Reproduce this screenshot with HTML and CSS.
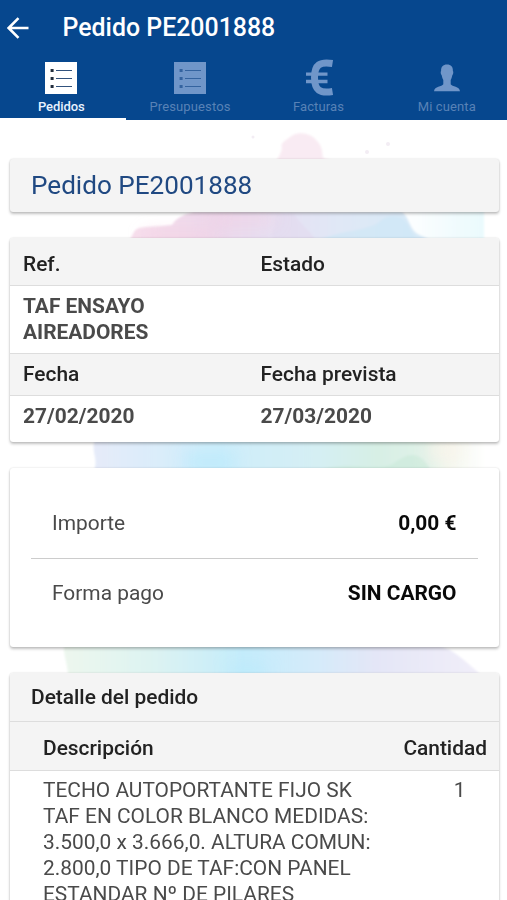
FILE: index.html
```html
<!DOCTYPE html>
<html lang="es">
<head>
<meta charset="utf-8">
<meta name="viewport" content="width=device-width, initial-scale=1">
<title>Pedido PE2001888</title>
<link rel="stylesheet" href="styles.css">
</head>
<body>
<header class="header">
  <div class="titlebar">
    <svg class="back" viewBox="0 0 22 22" aria-hidden="true"><path d="M21.500 11H2M11.500 1.200L1.700 11l9.800 9.800"/></svg>
    <h1 class="title">Pedido PE2001888</h1>
  </div>
  <nav class="tabs">
    <a class="tab active">
      <svg class="tab-icon" viewBox="0 0 32 32" aria-hidden="true"><path class="sheet" d="M0 0h32v32H0z"/><path class="lines" d="M11 8.500h16M11 16.500h16M11 24.500h16"/><path class="dots" d="M5.600 8.500h3M5.600 16.500h3M5.600 24.500h3"/></svg>
      <span>Pedidos</span>
    </a>
    <a class="tab">
      <svg class="tab-icon" viewBox="0 0 32 32" aria-hidden="true"><path class="sheet" d="M0 0h32v32H0z"/><path class="lines" d="M11 8.500h16M11 16.500h16M11 24.500h16"/><path class="dots" d="M5.600 8.500h3M5.600 16.500h3M5.600 24.500h3"/></svg>
      <span>Presupuestos</span>
    </a>
    <a class="tab">
      <svg class="tab-icon currency" viewBox="0 0 32 32" aria-hidden="true"><path d="M29.500 1.500C17 -.5 11.500 2.500 11.500 15.500S17 31.500 29.500 29.500"/><path class="bars" d="M3 12.200h21.500M3 19.500h21.500"/></svg>
      <span>Facturas</span>
    </a>
    <a class="tab">
      <svg class="tab-icon" viewBox="0 0 32 32" aria-hidden="true"><path class="sheet" d="M16 2.600c4 0 6.100 2.400 5.900 6.400.7.400.5 3.200-.5 4.100-.5 2.400-1 3.700-1.700 4.800v4.300c1.400 2.600 8.800 1.700 9.300 7.100H3c.5-5.400 7.900-4.500 9.300-7.100v-4.300c-.7-1.100-1.200-2.400-1.700-4.800-1-.9-1.200-3.700-.5-4.100C9.900 5 12 2.600 16 2.600z"/></svg>
      <span>Mi cuenta</span>
    </a>
  </nav>
</header>
<main class="content">
  <svg class="watercolor" viewBox="0 0 507 780" aria-hidden="true">
    <defs>
      <filter id="soft" x="-20%" y="-40%" width="140%" height="180%"><feGaussianBlur stdDeviation="8"/></filter>
      <filter id="edge"><feGaussianBlur stdDeviation="1"/></filter>
      <linearGradient id="top" gradientUnits="userSpaceOnUse" x1="128" y1="0" x2="425" y2="0"><stop offset="0" stop-color="#f7dfec"/><stop offset=".3" stop-color="#ecd7ea"/><stop offset=".52" stop-color="#e5e1f3"/><stop offset=".72" stop-color="#e0e8f6"/><stop offset="1" stop-color="#d6eaf8"/></linearGradient>
      <linearGradient id="mid"><stop offset="0" stop-color="#e6ebf9"/><stop offset=".32" stop-color="#cfeefb"/><stop offset=".58" stop-color="#d5eff3"/><stop offset=".72" stop-color="#d7efe5"/><stop offset=".85" stop-color="#e0f2e8"/><stop offset=".9" stop-color="#f3f7ee"/><stop offset="1" stop-color="#fff"/></linearGradient>
      <linearGradient id="low"><stop offset="0" stop-color="#edf7ee"/><stop offset=".22" stop-color="#dcf3f2"/><stop offset=".43" stop-color="#c4ecfb"/><stop offset=".6" stop-color="#d4ebfa"/><stop offset=".75" stop-color="#e4e6f7"/><stop offset="1" stop-color="#f1eef9"/></linearGradient>
      <linearGradient id="haze"><stop offset="0" stop-color="#fff"/><stop offset="1" stop-color="#eafafd"/></linearGradient>
    </defs>
    <g filter="url(#edge)">
      <path fill="#f9ebf3" d="M273 44c5-5 8-10 9-16-3-5 6-9 11-13 9-4 19 0 23 5 7 6 6 13 7 18 8 2 15 5 20 6z"/>
      <path fill="url(#haze)" d="M398 90h86v34h-86z"/>
      <path fill="url(#top)" d="M128 123c4-6 5-13 11-15 9-2 20-1 33-3 5-9 15-11 22-13h208c7 5 7 14 13 20 6 5 15 6 18 11z"/>
      <path fill="#e2dbef" opacity=".6" d="M276 94h18c6 10 12 12 24 29h-41c-10-8 1-20-1-29z"/>
      <path fill="#cfe7f7" opacity=".7" d="M320 120c20-10 43-8 58-17 5-5 15-10 25-4 8 7 7 17 20 24H310z"/>
      <path fill="url(#mid)" d="M95 320h391v32H93c7-12-3-20 2-32z"/>
      <path fill="#cae9db" opacity=".6" d="M324 349c27-8 49 3 69-5 15-12 28-14 38 7H324z"/>
      <path fill="url(#low)" d="M64 526h376c16 5 26 16 40 28H68c-1-12-5-21-4-28z"/>
    </g>
    <g filter="url(#soft)">
      <path fill="#f6cfe2" opacity=".6" d="M145 112h65v10h-65zM215 95h60v8h-60z"/>
      <path fill="#b8e9fc" opacity=".6" d="M185 330h50v24h-50zM230 545h35v15h-35z"/>
      <path fill="#faf2ea" opacity=".8" d="M426 323h35v15h-35z"/>
    </g>
    <g fill="#f3edf4"><circle cx="253" cy="17" r="1.500"/><circle cx="388" cy="24" r="2"/><circle cx="367" cy="32" r="2"/></g>
  </svg>
  <section class="card heading"><h2>Pedido PE2001888</h2></section>
  <section class="card summary">
    <div class="row head"><span>Ref.</span><span>Estado</span></div>
    <div class="row value reference"><span>TAF ENSAYO AIREADORES</span><span></span></div>
    <div class="row head dates"><span>Fecha</span><span>Fecha prevista</span></div>
    <div class="row value date-values"><span>27/02/2020</span><span>27/03/2020</span></div>
  </section>
  <section class="card payment">
    <div class="pay-row"><span>Importe</span><b>0,00 €</b></div>
    <div class="pay-row"><span>Forma pago</span><b>SIN CARGO</b></div>
  </section>
  <section class="card detail">
    <h3>Detalle del pedido</h3>
    <div class="detail-head"><span>Descripción</span><span>Cantidad</span></div>
    <div class="detail-row">
      <p>TECHO AUTOPORTANTE FIJO SK<br>TAF EN COLOR BLANCO MEDIDAS:<br>3.500,0 x 3.666,0. ALTURA COMUN:<br>2.800,0 TIPO DE TAF:CON PANEL<br>ESTANDAR Nº DE PILARES</p>
      <span class="quantity">1</span>
    </div>
  </section>
</main>
</body>
</html>
```
FILE: styles.css
```css
* { box-sizing: border-box; }
body {
  margin: 0;
  height: 900px;
  overflow: hidden;
  display: flex;
  flex-direction: column;
  background: #fff;
  color: #4a4a4a;
  font: 400 20.9px/26px Roboto, sans-serif;
}
h1, h2, h3, p { margin: 0; }

.header { flex: none; height: 120px; background: #06478e; color: #fff; }
.titlebar { height: 56px; padding-left: 7px; display: flex; align-items: center; }
.back { width: 22px; height: 22px; fill: none; stroke: #fff; stroke-width: 2.6; }
.title { margin-left: 33.5px; font-size: 24.9px; font-weight: 500; line-height: 30px; }
.tabs { height: 64px; margin-right: -4px; display: grid; grid-template-columns: 125.5px 129px 128px 1fr; }
.tab {
  padding-top: 5.5px;
  display: flex;
  flex-direction: column;
  align-items: center;
  color: #5882b6;
  font-size: 13px;
  line-height: 16px;
  letter-spacing: .12px;
}
.tab:first-child { padding-right: 3px; }
.tab.active { color: #e8f2ff; font-weight: 500; border-bottom: 2px solid #fff; letter-spacing: -.1px; }
.tab span { margin-top: 5.5px; }
.tab-icon { width: 32px; height: 32px; flex: none; }
.sheet { fill: #7096c9; }
.active .sheet { fill: #fff; }
.lines, .dots { stroke: #34639f; stroke-width: 1.2; }
.dots { stroke-width: 3; }
.active .lines { stroke: #31527d; }
.active .dots { stroke: #222e3d; }
.currency { overflow: visible; fill: none; stroke: #7096c9; stroke-width: 7; }
.currency .bars { stroke-width: 3.3; }

.content { position: relative; flex: 1; min-height: 0; padding: 39px 8px 0 10px; overflow: hidden; }
.watercolor { position: absolute; inset: 0; width: 507px; height: 780px; }
.card {
  position: relative;
  margin-bottom: 26px;
  background: #fff;
  border-radius: 3px;
  box-shadow: 0 2px 3px rgba(0, 0, 0, .24), 0 0 2px rgba(0, 0, 0, .16);
  overflow: hidden;
}
.heading { height: 53px; padding: 12px 21px; background: #f4f4f4; }
.heading h2 { font-size: 26.1px; line-height: 28px; font-weight: 400; color: #204982; }

.summary { height: 204px; }
.row { padding: 0 13px; display: grid; grid-template-columns: 237.5px 1fr; }
.head { height: 48px; padding-top: 13px; background: #f4f4f4; border-bottom: 1px solid #ddd; color: #222; font-weight: 500; }
.value { font-weight: 700; }
.reference { height: 67px; padding-top: 7px; }
.reference span { max-width: 160px; }
.dates { height: 43px; padding-top: 7px; border-top: 1px solid #ddd; }
.date-values { padding-top: 7px; }

.payment { height: 179px; padding: 20px 21px; }
.pay-row { height: 70px; padding: 0 21.5px 0 21px; display: flex; align-items: center; justify-content: space-between; }
.pay-row + .pay-row { height: 68px; border-top: 1px solid #ccc; }
.pay-row b { color: #090909; }

.detail { height: 280px; }
.detail h3 { height: 49px; padding: 11px 21px; background: #f4f4f4; border-bottom: 1px solid #ddd; color: #222; font-size: inherit; font-weight: 500; }
.detail-head { height: 49px; padding: 13px 12px 0 33px; display: flex; justify-content: space-between; background: #f4f4f4; border-bottom: 1px solid #ddd; color: #222; font-weight: 500; }
.detail-row { padding: 6px 33.5px 0 33px; display: flex; justify-content: space-between; }
.detail-row p { white-space: nowrap; }
```
